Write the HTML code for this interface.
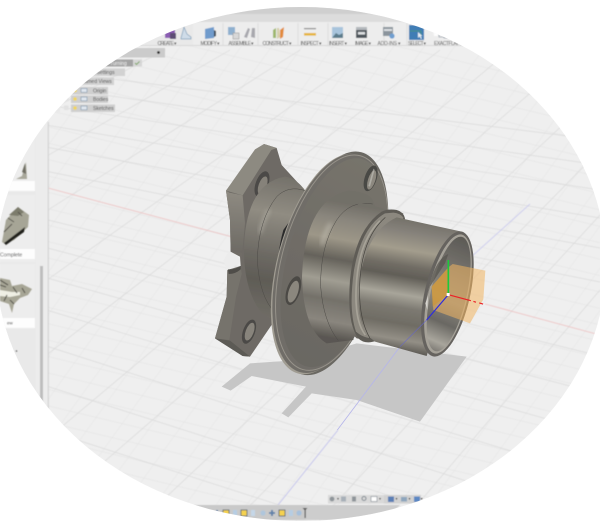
<!DOCTYPE html>
<html><head><meta charset="utf-8"><style>
html,body{margin:0;padding:0;background:#fff;width:600px;height:531px;overflow:hidden}
svg{display:block}
text{font-family:"Liberation Sans",sans-serif;font-size:5px;fill:#4a4a4a}
</style></head><body>
<svg width="600" height="531" viewBox="0 0 600 531" xmlns="http://www.w3.org/2000/svg">
<defs>
<clipPath id="oval"><ellipse cx="301" cy="264" rx="305" ry="257"/></clipPath>
<pattern id="minor" width="26" height="14" patternUnits="userSpaceOnUse" patternTransform="matrix(1 .24 -.72 1 0 0)">
<path d="M0 0H26M0 0V14" stroke="#e0e0e0" stroke-width="0.7" fill="none"/>
</pattern>
<filter id="b1" x="-5%" y="-5%" width="110%" height="110%"><feGaussianBlur stdDeviation="0.55"/></filter>
<filter id="b08" x="-5%" y="-5%" width="110%" height="110%"><feGaussianBlur stdDeviation="0.8"/></filter>
<filter id="b2" x="-20%" y="-20%" width="140%" height="140%"><feGaussianBlur stdDeviation="1.1"/></filter>
<filter id="b6" x="-30%" y="-30%" width="160%" height="160%"><feGaussianBlur stdDeviation="7"/></filter>
<linearGradient id="cyl" gradientUnits="userSpaceOnUse" x1="660" y1="270" x2="595" y2="660">
<stop offset="0" stop-color="#737068"/><stop offset=".1" stop-color="#85817a"/><stop offset=".24" stop-color="#a39d8d"/><stop offset=".36" stop-color="#716d65"/><stop offset=".44" stop-color="#615e57"/><stop offset=".58" stop-color="#a8a59a"/><stop offset=".68" stop-color="#7c7971"/><stop offset=".8" stop-color="#6f6c64"/><stop offset=".92" stop-color="#938f86"/><stop offset="1" stop-color="#625f59"/>
</linearGradient>
<linearGradient id="cyl2" gradientUnits="userSpaceOnUse" x1="470" y1="225" x2="400" y2="625">
<stop offset="0" stop-color="#726f68"/><stop offset=".12" stop-color="#8a867d"/><stop offset=".27" stop-color="#9d9788"/><stop offset=".42" stop-color="#65625b"/><stop offset=".58" stop-color="#a09d92"/><stop offset=".72" stop-color="#74716a"/><stop offset=".88" stop-color="#8a867e"/><stop offset="1" stop-color="#5a5752"/>
</linearGradient>
<linearGradient id="inner" gradientUnits="userSpaceOnUse" x1="760" y1="320" x2="700" y2="660">
<stop offset="0" stop-color="#5c5a56"/><stop offset=".35" stop-color="#7d7a73"/><stop offset=".55" stop-color="#8b877e"/><stop offset=".75" stop-color="#6a6863"/><stop offset=".92" stop-color="#a8a59c"/><stop offset="1" stop-color="#7f7c76"/>
</linearGradient>
<linearGradient id="rear" gradientUnits="userSpaceOnUse" x1="240" y1="140" x2="170" y2="570">
<stop offset="0" stop-color="#75726b"/><stop offset=".25" stop-color="#908c82"/><stop offset=".55" stop-color="#6c6963"/><stop offset=".72" stop-color="#5f5c56"/><stop offset="1" stop-color="#716e67"/>
</linearGradient>
<linearGradient id="edge" gradientUnits="userSpaceOnUse" x1="100" y1="180" x2="60" y2="630">
<stop offset="0" stop-color="#8f8b82"/><stop offset=".4" stop-color="#6e6b65"/><stop offset=".62" stop-color="#797670"/><stop offset="1" stop-color="#85827a"/>
</linearGradient>
<linearGradient id="face" gradientUnits="userSpaceOnUse" x1="480" y1="80" x2="320" y2="720">
<stop offset="0" stop-color="#77746c"/><stop offset=".5" stop-color="#6f6c66"/><stop offset="1" stop-color="#6a6762"/>
</linearGradient>
</defs>
<g clip-path="url(#oval)">
<rect width="600" height="531" fill="#efefef"/>
<rect width="600" height="531" fill="url(#minor)" filter="url(#b1)"/>

<!-- grid -->
<g filter="url(#b1)" fill="none" stroke="#dadada" stroke-width="0.7">
<path d="M40 70L600 140M40 86L600 165M40 104L600 190M40 124L600 218M40 146L600 248M40 170L600 282M40 218L600 356M40 246L600 394M40 276L600 434M40 308L600 478M40 344L600 524M40 384L500 531M40 428L360 531M40 470L240 531"/>
<path d="M300 50L40 215M370 50L40 285M440 50L40 360M510 50L40 445M580 50L60 500M600 90L130 531M600 150L225 531M600 215L310 531M600 290L395 531M600 365L480 531M230 50L40 160M165 50L40 115"/>
</g>
<!-- axes -->
<g filter="url(#b1)" fill="none">
<path d="M48 188L240 239" stroke="#eec3c3" stroke-width="0.9"/>
<path d="M485 304L600 335" stroke="#eec3c3" stroke-width="0.9"/>
<path d="M338 430L278 505" stroke="#c2c2ec" stroke-width="0.9"/>
<path d="M470 258L530 204" stroke="#ccccee" stroke-width="0.9"/>
</g>

<!-- top chrome -->
<g filter="url(#b1)">
<rect x="0" y="5" width="600" height="9" fill="#cfcfcf"/>
<rect x="0" y="14" width="600" height="9" fill="#dcdcdc"/>
<rect x="0" y="22" width="470" height="24" fill="#ededed"/>
<rect x="470" y="22" width="130" height="24" fill="#ebebeb"/>
<path d="M0 45.5H475" stroke="#d8d8d8" stroke-width="1"/>
<path d="M192 23V45M223 23V45M258 23V45M298 23V45M328 23V45M384 23V45M407 23V45" stroke="#dadada" stroke-width="0.8"/>
<rect x="145" y="22" width="48" height="23" fill="#e9e9e9"/>
<path d="M150 30l8-3v9h-8z" fill="#8fa3b8"/>
<rect x="165" y="27" width="10" height="11" fill="#8b5db3"/>
<rect x="170" y="33" width="6" height="6" fill="#5d4d75"/>
<path d="M181 38l3-11 3 7 4 3 0 2h-10z" fill="#cfdce8" stroke="#7f9db8" stroke-width=".7"/>
<path d="M205 29l9-2v11l-9 1z" fill="#6f9bcc"/><path d="M214 30l2 1v5l-2 1z" fill="#404a55"/>
<rect x="228" y="27" width="7" height="8" fill="#8fb0cf"/><rect x="233" y="33" width="6" height="6" fill="#d8d8d8" stroke="#9a9a9a" stroke-width=".6"/>
<path d="M244 37l4-9 2 1-3 9zM251 37l1-9h3v10z" fill="#a8a8ae"/>
<path d="M273 30l3-2v10h-3z" fill="#9fb86d"/><path d="M277 28h2l1 9-3 2z" fill="#d5cfa9"/><path d="M280 30l4-3-1 10-3 2z" fill="#e28b3d"/>
<rect x="304" y="28" width="12" height="1.2" fill="#8a8a8a"/><rect x="304" y="33" width="12" height="2.6" fill="#e6b63c"/>
<rect x="332" y="27" width="11" height="11" fill="#a8c4dc"/><path d="M332 38l4-5 3 2 4-2v5z" fill="#5b7c8c"/>
<rect x="356" y="29" width="11" height="9" fill="#50565c"/><rect x="356" y="27" width="11" height="3" fill="#b3b8bc"/><rect x="358" y="32" width="7" height="2.5" fill="#dde0e2"/>
<rect x="383" y="27" width="10" height="9" fill="#8b949c"/><rect x="384" y="29" width="8" height="2" fill="#dcdfe2"/><circle cx="392" cy="36" r="2.6" fill="#6f9fd0"/>
<rect x="409" y="25" width="15" height="15" fill="#3f7db5"/>
<path d="M410 31H421M421 31V35" stroke="#4f9a70" stroke-width=".7" fill="none"/>
<path d="M418 32l0 6 1.500-1.500 1.500 2.500 1-.6-1.500-2.300h2z" fill="#e8eef3"/>
<path d="M434 29l3 1 2 1v6h5v1h5" fill="none" stroke="#9aa3ad" stroke-width=".8"/><path d="M433 27l5 2v7h-4z" fill="#fdfdfd"/>
<path d="M450 36h3" stroke="#888" stroke-width=".6"/>
<g text-anchor="middle">
<text x="167" y="45" textLength="19">CREATE ▾</text>
<text x="210" y="45" textLength="19">MODIFY ▾</text>
<text x="241" y="45" textLength="25">ASSEMBLE ▾</text>
<text x="277" y="45" textLength="29">CONSTRUCT ▾</text>
<text x="311" y="45" textLength="21">INSPECT ▾</text>
<text x="338" y="45" textLength="18">INSERT ▾</text>
<text x="363" y="45" textLength="16">IMAGE ▾</text>
<text x="389" y="45" textLength="23">ADD-INS ▾</text>
<text x="417" y="45" textLength="18">SELECT ▾</text>
<text x="448" y="45" textLength="28">EXACTFLAT ▾</text>
</g>
<rect x="60" y="48" width="105" height="9.500" fill="#cbcbcb"/>
<circle cx="158.500" cy="52.500" r="1.400" fill="#222"/>
<rect x="100" y="59.500" width="33" height="7" fill="#a3a3a3"/>
<text x="110" y="64.800" style="font-size:5px;fill:#f3f3f3">Turning</text>
<rect x="133" y="59.500" width="9" height="7" fill="#d6d6d6"/>
<path d="M135 63l1.500 1.500 3-3" stroke="#76a35e" fill="none" stroke-width=".9"/>
<rect x="80" y="68.500" width="45" height="7.500" fill="#d2d2d2"/>
<text x="84" y="74" style="font-size:5px">ment Settings</text>
<rect x="78" y="77.500" width="36" height="7.500" fill="#d2d2d2"/>
<text x="81" y="83" style="font-size:5px">Named Views</text>
<g fill="#cfcfcf"><rect x="71" y="87" width="37" height="7.500"/><rect x="71" y="95.500" width="37" height="7.500"/><rect x="71" y="104.500" width="44" height="7.500"/></g>
<g fill="#f0d560"><circle cx="75" cy="90.500" r="1.800"/><circle cx="75" cy="99" r="1.800"/><circle cx="75" cy="108" r="1.800"/></g>
<g fill="#dfe6ee" stroke="#7c93ab" stroke-width=".6"><rect x="81" y="88.500" width="6" height="3.800"/><rect x="81" y="97" width="6" height="3.800"/><rect x="81" y="106" width="6" height="3.800"/></g>
<text x="93" y="92.500" style="font-size:5px">Origin</text>
<text x="93" y="101" style="font-size:5px">Bodies</text>
<text x="93" y="110" style="font-size:5px">Sketches</text>
<g fill="#e2e2e2"><rect x="64" y="96.500" width="4.500" height="4.500"/><rect x="64" y="105.500" width="4.500" height="4.500"/></g>
<rect x="0" y="112" width="48" height="419" fill="#e9e9e9"/>
<rect x="0" y="46" width="60" height="66" fill="#e9e9e9"/>
<rect x="36" y="112" width="12" height="419" fill="#ececec"/>
<rect x="47.800" y="122" width="1" height="400" fill="#cfcfcf"/>
<rect x="40" y="266" width="3" height="137" fill="#bdbdbd"/>
<rect x="0" y="130" width="35" height="61" fill="#ededed"/>
<rect x="0" y="181" width="35" height="10" fill="#fdfdfd"/>
<rect x="0" y="195" width="35" height="67" fill="#ededed"/>
<rect x="0" y="249" width="35" height="10" fill="#fdfdfd"/>
<text x="0" y="256.500" style="font-size:5.200px">Complete</text>
<rect x="0" y="264" width="35" height="64" fill="#ededed"/>
<rect x="0" y="318" width="35" height="10" fill="#fdfdfd"/>
<text x="7" y="324.500" style="font-size:4.500px">ew</text>
<circle cx="16.500" cy="351" r=".8" fill="#333"/>
</g>
<!-- thumbnails -->
<g filter="url(#b1)">
<path d="M16 179l6-3 4-14 1 17z" fill="#a9a89b"/>
<path d="M22 172l3-9 1 11z" fill="#6f6e64"/>
<path d="M2 242l4-22 12-13 11 8-1 12-14 13-9 4z" fill="#a6a596"/>
<path d="M4 243l21-16-1 5-18 13z" fill="#23231f"/>
<path d="M9 215l9-8 6 5-6 4z" fill="#7c7b6c"/>
<path d="M4 232l8-8M8 218l6 4M18 212l4 4" stroke="#55544b" stroke-width="1" fill="none"/>
<path d="M0 278l10 2 2 6 10 -2 10 5 -4 6-8 3-6 6-2 9-3-9-9-3z" fill="#a7a696"/>
<path d="M0 290l12 2 8 0 0 3-10 2-10-1z" fill="#efefe4"/>
<path d="M0 280l8 5M13 287l4 6M22 288l3 5M4 301l3-6M0 285l6 2M10 300l4 4" stroke="#55544b" stroke-width="1.100" fill="none"/>
</g>

<!-- bottom -->
<g filter="url(#b1)">
<path d="M170 505H306V520H170z" fill="#c9c9c9"/>
<path d="M306 505H400L384 520H306z" fill="#cdcdcd"/>
<rect x="328" y="495" width="93" height="8.500" fill="#d9d9d9"/>
<rect x="384" y="495" width="37" height="8.500" fill="#d2d2d2"/>
<circle cx="332" cy="499" r="2.400" fill="#8f959a"/><path d="M337 498h2l-1 2z" fill="#333"/>
<rect x="341" y="496.500" width="5" height="5" fill="#a8b0b8"/>
<rect x="352" y="496.500" width="4" height="5" fill="#8f959a"/>
<circle cx="364" cy="498.500" r="2" fill="none" stroke="#7f8890"/>
<rect x="371" y="496.500" width="6" height="5" fill="#fff" stroke="#7f8890" stroke-width=".6"/><path d="M379 498h2l-1 2z" fill="#333"/>
<rect x="388" y="496.500" width="6" height="5.500" fill="#5b7fb5"/><path d="M395.500 498h2l-1 2z" fill="#333"/>
<rect x="401" y="497" width="6" height="4.500" fill="#8ea6bd"/><path d="M408.500 498h2l-1 2z" fill="#333"/>
<rect x="414" y="496.500" width="6" height="5.500" fill="#5b88c4"/><path d="M420.500 498h2l-1 2z" fill="#333"/>
<rect x="190" y="510" width="5" height="6" fill="#8fa8c6"/>
<circle cx="199" cy="513" r="2.600" fill="#a8c0da"/>
<circle cx="208" cy="513" r="2.600" fill="#b5c7da"/>
<path d="M214 513h6M217 510v6" stroke="#5c7fa8" stroke-width="1.800"/>
<rect x="223" y="510" width="6" height="6" fill="#f5d24f" stroke="#374a66" stroke-width=".7"/>
<rect x="233" y="510" width="4" height="6" fill="#b6cde3"/>
<rect x="241" y="510" width="6" height="6" fill="#f5d24f" stroke="#374a66" stroke-width=".7"/>
<rect x="251" y="510" width="4" height="6" fill="#c5d7e8"/>
<circle cx="263" cy="513" r="2.600" fill="#afc6dc"/>
<path d="M269 513h6M272 510v6" stroke="#5c7fa8" stroke-width="1.800"/>
<rect x="279" y="510" width="6" height="6" fill="#f5d24f" stroke="#374a66" stroke-width=".7"/>
<rect x="289" y="510" width="4" height="6" fill="#b6cde3"/>
<circle cx="299" cy="513" r="2.600" fill="#a5c0dc"/>
<rect x="304.500" y="508" width="1.200" height="10" fill="#555"/>
<path d="M302.500 508h5l-2.500 2.500z" fill="#555"/>
</g>

<!-- PART -->
<g transform="translate(200 130) scale(.33333)" filter="url(#b08)">
<path d="M65 770L150 700L300 690L470 640L800 680L660 875L470 810L335 790L265 862L245 850L318 770L155 738L92 782Z" fill="#c6c6c6" filter="url(#b2)"/>
<!-- blue axis beyond part -->
<path d="M600 650L412 900" stroke="#b5b5ea" stroke-width="2.500"/>
<!-- rear flange -->
<path d="M192 42L230 54L245 105L300 165L320 190L260 560L218 580L150 680L128 678L45 625L80 500L82 420L122 408L120 380L92 365L90 270L78 182Z" fill="#6e6b65"/>
<path d="M78 182L88 188L128 196L135 280L125 382L92 365L90 270Z" fill="url(#edge)"/>
<path d="M82 422L122 408L125 432L108 500L88 630L45 625L80 500Z" fill="#76736c"/>
<path d="M78 182L165 58L192 42L230 54L214 60L128 196Z" fill="#8d8a81"/>
<path d="M45 625L90 632L150 680L128 678Z" fill="#5c5a55"/>
<path d="M85 366Q120 376 118 398Q104 410 80 418L70 392Z" fill="#ececec"/>
<path d="M84 418Q100 420 122 408L122 418Q106 432 86 432Z" fill="#4f4d49"/>
<ellipse cx="186" cy="162" rx="19" ry="40" transform="rotate(20 186 162)" fill="#4c4a46"/>
<ellipse cx="188" cy="166" rx="12" ry="28" transform="rotate(20 188 166)" fill="#86827a"/>
<ellipse cx="147" cy="605" rx="18" ry="38" transform="rotate(20 147 605)" fill="#4c4a46"/>
<ellipse cx="149" cy="605" rx="12" ry="28" transform="rotate(20 149 605)" fill="#88847c"/>
<!-- rear hub -->
<path d="M255 140Q290 145 318 185L260 560Q220 585 178 540Q130 470 132 350Q140 160 255 140Z" fill="url(#rear)"/>
<path d="M180 310Q188 270 208 240" stroke="#bdbab0" stroke-width="6" fill="none" filter="url(#b6)"/>
<path d="M172 390Q175 270 230 200Q265 165 316 182M172 390Q178 500 225 548" stroke="#4c4a46" stroke-width="1.500" fill="none"/>
<path d="M250 300Q225 390 232 500L262 540L300 230Z" fill="#2b2a2c"/>
<!-- main disc -->
<ellipse cx="395" cy="400" rx="150" ry="345" transform="rotate(15 395 400)" fill="#6a6762"/>
<ellipse cx="382" cy="402" rx="150" ry="340" transform="rotate(15 382 402)" fill="#a09c92"/>
<ellipse cx="388" cy="400" rx="152" ry="338" transform="rotate(15 388 400)" fill="#706d67"/>
<ellipse cx="395" cy="398" rx="150" ry="332" transform="rotate(15 395 398)" fill="none" stroke="#96928a" stroke-width="3"/>
<ellipse cx="402" cy="398" rx="142" ry="322" transform="rotate(15 402 398)" fill="url(#face)"/>
<ellipse cx="512" cy="145" rx="18" ry="40" transform="rotate(18 512 145)" fill="#4a4844"/>
<ellipse cx="515" cy="150" rx="11" ry="30" transform="rotate(18 515 150)" fill="#8c887f"/>
<path d="M505 168L520 116L524 119L510 170Z" fill="#cfcfca" opacity=".5"/>
<ellipse cx="280" cy="482" rx="20" ry="45" transform="rotate(18 280 482)" fill="#4b4945"/>
<ellipse cx="280" cy="485" rx="14" ry="34" transform="rotate(18 280 485)" fill="#8b877e"/>
<!-- fillet base -->
<path d="M445 182Q510 185 520 215L530 240L460 630L380 640Q310 600 306 440Q315 210 445 182Z" fill="url(#cyl2)"/>
<path d="M366 345Q374 310 392 280" stroke="#c9c6bb" stroke-width="6" fill="none" filter="url(#b6)"/>
<path d="M362 470Q360 350 410 270Q450 210 518 222M362 470Q370 575 415 632" stroke="#4c4a46" stroke-width="1.500" fill="none"/>
<!-- middle cylinder -->
<path d="M480 218L610 250L520 632L470 625Q400 560 395 430Q405 270 480 218Z" fill="url(#cyl2)"/>
<path d="M590 240Q610 245 615 265L530 632Q495 645 475 625Q440 580 450 450Q465 300 545 245Q565 235 590 240Z" fill="#5e5c57"/>
<path d="M580 248Q600 250 610 262L520 625Q490 625 468 605Q445 540 462 420Q485 290 555 250Z" fill="#8c887f"/>
<!-- main cylinder -->
<path d="M590 262L790 306L680 678L525 635Q460 590 480 440Q505 300 590 262Z" fill="url(#cyl)"/>
<path d="M540 272Q480 330 470 450Q460 570 496 615" stroke="#a7a398" stroke-width="5" fill="none"/>
<path d="M556 262Q490 320 480 445Q472 560 510 625" stroke="#45433e" stroke-width="2" fill="none"/>
<!-- bore -->
<ellipse cx="742" cy="492" rx="68" ry="192" transform="rotate(13 742 492)" fill="#66635e"/>
<ellipse cx="744" cy="492" rx="60" ry="183" transform="rotate(13 744 492)" fill="#a5a198"/>
<ellipse cx="746" cy="492" rx="54" ry="176" transform="rotate(13 746 492)" fill="url(#inner)"/>
<path d="M690 470L735 400L745 372Q700 390 682 500Z" fill="#55534f" opacity=".7"/>
<path d="M676 520L684 498L682 540Z" fill="#d7d5cf"/>
<!-- orange plane -->
<path d="M758 402L856 422L850 508L810 580L700 540L695 470L745 412Z" fill="#f0b560" opacity=".55"/>
<path d="M745 412L745 494L698 530L695 470Z" fill="#cf9327" opacity=".55"/>
<!-- axes -->
<path d="M745 494V390" stroke="#1cc93a" stroke-width="5"/>
<path d="M745 494L860 525" stroke="#ec2027" stroke-width="3.500" stroke-dasharray="70 8 8 10 12"/>
<path d="M745 494L680 570" stroke="#2c2be0" stroke-width="3.500"/>
<path d="M680 570L600 650" stroke="#6666cc" stroke-width="1.800" opacity=".9"/>
<rect x="740" y="489" width="9" height="9" fill="#fff"/>
</g>
</g>
</svg>
</body></html>
